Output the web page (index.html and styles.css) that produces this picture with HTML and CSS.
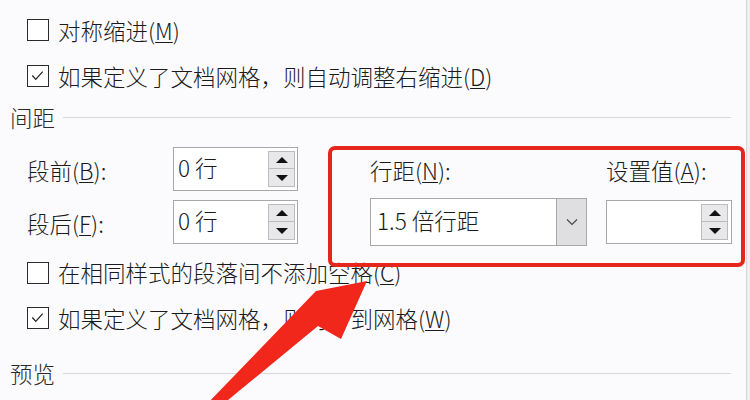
FILE: index.html
```html
<!DOCTYPE html>
<html lang="zh-CN">
<head>
<meta charset="utf-8">
<title>段落 - 间距</title>
<link rel="stylesheet" href="styles.css">
</head>
<body>
<div class="page">
  <div class="check-row"><span class="cb"></span><span class="txt">对称缩进(<u>M</u>)</span></div>
  <div class="check-row"><span class="cb"><svg viewBox="0 0 22 22" class="tick"><polyline points="5,11 9,15.5 17,6.5"/></svg></span><span class="txt">如果定义了文档网格，则自动调整右缩进(<u>D</u>)</span></div>

  <div class="section"><span class="sec-title">间距</span><span class="rule"></span></div>

  <div class="spacing">
    <div class="lbl">段前(<u>B</u>):</div>
    <div class="spin"><span class="val">0 行</span><span class="arrows"><span class="btn"><i class="up"></i></span><span class="btn"><i class="down"></i></span></span></div>
    <div class="lbl">行距(<u>N</u>):</div>
    <div class="lbl">设置值(<u>A</u>):</div>

    <div class="lbl">段后(<u>F</u>):</div>
    <div class="spin"><span class="val">0 行</span><span class="arrows"><span class="btn"><i class="up"></i></span><span class="btn"><i class="down"></i></span></span></div>
    <div class="select"><span class="val">1.5 倍行距</span><span class="drop"><svg viewBox="0 0 12 8" class="chev"><polyline points="1,1.5 6,6.5 11,1.5"/></svg></span></div>
    <div class="spin wide"><span class="val"></span><span class="arrows"><span class="btn"><i class="up"></i></span><span class="btn"><i class="down"></i></span></span></div>
  </div>

  <div class="check-row r5"><span class="cb"></span><span class="txt">在相同样式的段落间不添加空格(<u>C</u>)</span></div>
  <div class="check-row"><span class="cb"><svg viewBox="0 0 22 22" class="tick"><polyline points="5,11 9,15.5 17,6.5"/></svg></span><span class="txt">如果定义了文档网格，则对齐到网格(<u>W</u>)</span></div>

  <div class="section s2"><span class="sec-title">预览</span><span class="rule"></span></div>

  <div class="highlight"></div>
  <svg class="arrow" viewBox="0 0 750 400" width="750" height="400"><polygon points="367,281 316,291 206,405 222,405 318,326 341,339"/></svg>
</div>
</body>
</html>
```
FILE: styles.css
```css
html, body {
  margin: 0;
  padding: 0;
  background: #efeff0;
}
body {
  font-family: "Noto Sans CJK SC", "Noto Sans", sans-serif;
  font-size: 22.5px;
  font-weight: 300;
  color: #1b1b1b;
  overflow: hidden;
}
.page {
  position: relative;
  width: 747px;
  height: 400px;
  box-sizing: border-box;
  border-right: 1px solid #d6d6d8;
  background: #fbfbfd;
  padding-top: 7px;
}
u {
  text-decoration: underline;
  text-decoration-thickness: 1px;
  text-underline-offset: 2px;
}
.check-row {
  display: flex;
  align-items: center;
  height: 46px;
  padding-left: 27px;
  line-height: 1;
}
.check-row.r5 {
  margin-top: 6px;
  height: 45px;
}
.cb {
  width: 22px;
  height: 22px;
  box-sizing: border-box;
  border: 1.5px solid #2a2a2a;
  background: #fff;
  margin-right: 9px;
  flex: none;
  display: flex;
}
.tick {
  width: 19px;
  height: 19px;
}
.tick polyline {
  fill: none;
  stroke: #1e1e1e;
  stroke-width: 1.4;
}
.txt {
  white-space: nowrap;
}
.section {
  display: flex;
  align-items: center;
  height: 36px;
  padding-left: 10px;
  padding-right: 15px;
  line-height: 1;
  color: #2a2a2a;
}
.section.s2 {
  margin-top: 15px;
  height: 34px;
}
.rule {
  flex: 1;
  height: 1px;
  background: #d8d8da;
  margin-left: 8px;
}
.spacing {
  display: grid;
  grid-template-columns: 146px 197px 236px 126px;
  grid-template-rows: 44px 44px;
  row-gap: 9px;
  margin-top: 12px;
  padding-left: 27px;
}
.lbl {
  align-self: center;
  white-space: nowrap;
  line-height: 1;
  padding-top: 3px;
}
.spin {
  width: 125px;
  height: 44px;
  box-sizing: border-box;
  border: 1px solid #a8a8aa;
  background: #fff;
  display: flex;
  align-items: center;
  padding-left: 4px;
  line-height: 1;
}
.spin.wide {
  width: 126px;
}
.val {
  white-space: nowrap;
  padding-bottom: 3px;
}
.arrows {
  margin-left: auto;
  margin-right: 2px;
  display: flex;
  flex-direction: column;
}
.spin.wide .arrows {
  margin-right: 3px;
}
.btn {
  width: 27px;
  height: 18px;
  box-sizing: border-box;
  border: 1px solid #bcbcbe;
  background: #e8e8ea;
  display: flex;
  align-items: center;
  justify-content: center;
}
.btn + .btn {
  border-top: none;
}
.up, .down {
  width: 0;
  height: 0;
  border-left: 6px solid transparent;
  border-right: 6px solid transparent;
}
.up {
  border-bottom: 6px solid #111;
}
.down {
  border-top: 6px solid #111;
}
.select {
  width: 217px;
  height: 48px;
  align-self: center;
  box-sizing: border-box;
  border: 1px solid #a8a8aa;
  background: #fff;
  display: flex;
  align-items: center;
  padding-left: 6px;
  line-height: 1;
}
.drop {
  margin-left: auto;
  width: 30px;
  height: 100%;
  box-sizing: border-box;
  border-left: 1px solid #a8a8aa;
  background: #dfdfe1;
  display: flex;
  align-items: center;
  justify-content: center;
}
.chev {
  width: 12px;
  height: 8px;
}
.chev polyline {
  fill: none;
  stroke: #444;
  stroke-width: 1.1;
}
.highlight {
  position: absolute;
  left: 328px;
  top: 146px;
  width: 417px;
  height: 121px;
  box-sizing: border-box;
  border: 4px solid #e5261d;
  border-radius: 7px;
}
.arrow {
  position: absolute;
  left: 0;
  top: 0;
  pointer-events: none;
}
.arrow polygon {
  fill: #f2271c;
}
```
